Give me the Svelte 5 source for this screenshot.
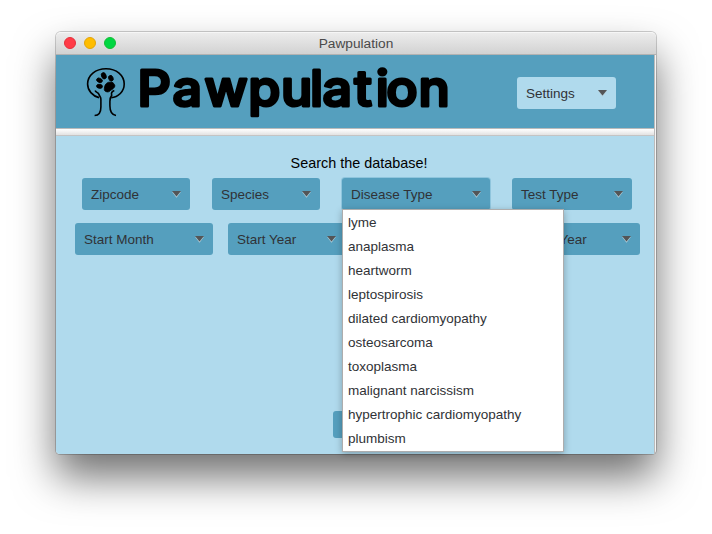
<script>
  const filters = [
    [['Zipcode', 108], ['Species', 108], ['Disease Type', 148], ['Test Type', 120]],
    [['Start Month', 138], ['Start Year', 117], ['', 148], ['End Year', 117]]
  ];
  const diseases = [
    'lyme', 'anaplasma', 'heartworm', 'leptospirosis', 'dilated cardiomyopathy',
    'osteosarcoma', 'toxoplasma', 'malignant narcissism', 'hypertrophic cardiomyopathy', 'plumbism'
  ];
</script>

{#snippet arrow()}
  <svg class="arrow" width="9" height="7" viewBox="0 0 9 7">
    <path d="M0 .8h9L4.5 6.8z" fill="#b5cfda" />
    <path d="M0 0h9L4.5 5.4z" fill="#535557" />
  </svg>
{/snippet}

<main>
  <div class="window">
    <div class="titlebar">
      <div class="lights"><i class="red"></i><i class="yellow"></i><i class="green"></i></div>
      <span class="title">Pawpulation</span>
    </div>
    <div class="content">
      <header>
        <svg class="logo" width="40" height="50" viewBox="0 0 40 50" fill="none" stroke="#000" stroke-width="1.6">
          <path d="M13 30.6C6.500 29 1.600 23.500 1.600 17C1.600 8.300 9.500 1.700 20 1.700s18.200 6.600 18.200 15.300c0 7.500-6 13.400-13 13.600" />
          <path d="M9.200 23.500c.4 2 3 1.700 3.700 3.800c.5 2 2.300 2.600 2 5.200v7.500c0 5-2 8.500-6.300 8.500M28.300 23.500c-2.500 1-3.300 2.700-2.600 4.800c-1.500 2-1.800 3.500-1.800 6v4.500c0 5 2 9.200 6.100 9.700" />
          <g fill="#000" stroke-width=".8">
            <ellipse cx="13.500" cy="13.300" rx="3" ry="2.100" transform="rotate(25 13.500 13.300)" />
            <ellipse cx="17.800" cy="8.800" rx="2.300" ry="3.300" transform="rotate(-22 17.800 8.800)" />
            <ellipse cx="24.900" cy="11.300" rx="2.200" ry="3" transform="rotate(-22 24.900 11.300)" />
            <ellipse cx="13.500" cy="19.300" rx="3" ry="2" transform="rotate(10 13.500 19.300)" />
            <path d="M20.800 16.200c1.300-1.200 2.800-1.300 4.200-.7c1.500-.5 2.600.3 2.800 1.500c1.500.8 1.300 3-.1 4.100c-.8 1.200-2 1.600-3 2.200c-1.200 1.600-3 1.900-4.300 1.400c-1.800-.3-2.400-1.900-2-3.500c.2-1.600.6-4 2.400-5z" />
          </g>
        </svg>
        <svg class="brand" width="320" height="66" viewBox="135 60 320 66">
          <text transform="scale(1.04 1)" y="106" x="132.300 165.900 196.600 238.600 270.200 298.100 310 340.700 361.200 371.500 402.300">Pawpulation</text>
        </svg>
        <button class="settings"><span>Settings</span>{@render arrow()}</button>
      </header>
      <div class="divider"></div>
      <section>
        <p>Search the database!</p>
        {#each filters as row, r}
          <div class="row" class:second={r === 1}>
            {#each row as [label, width]}
              <div class="field">
                <button class:open={label === 'Disease Type'} style:width="{width}px">
                  <span>{label}</span>{@render arrow()}
                </button>
                {#if label === 'Disease Type'}
                  <ul>
                    {#each diseases as d}<li>{d}</li>{/each}
                  </ul>
                {/if}
              </div>
            {/each}
          </div>
        {/each}
        <button class="search" aria-label="Search"></button>
      </section>
    </div>
  </div>
</main>

<style>
  :global(body) { background: #fff; overflow: hidden; }
  main {
    box-sizing: border-box;
    width: 712px;
    height: 534px;
    padding: 32px 55px 0 56px;
    font: 13.5px "Liberation Sans", Arial, sans-serif;
    color: #303236;
    overflow: hidden;
  }
  .window {
    box-sizing: border-box;
    width: 600px;
    height: 422px;
    background: #f4f4f4;
    border-radius: 5px 5px 4px 4px;
    box-shadow: 0 0 0 1px rgba(0, 0, 0, .19), 0 23px 42px rgba(0, 0, 0, .56);
  }
  .titlebar {
    box-sizing: border-box;
    position: relative;
    height: 23px;
    display: flex;
    justify-content: center;
    align-items: center;
    background: linear-gradient(#ececec, #d2d2d2);
    border-top: 1px solid #f6f6f6;
    border-bottom: 1px solid #b2b2b2;
    border-radius: 5px 5px 0 0;
  }
  .title { color: #4a4a4a; font-size: 13.7px; }
  .lights { position: absolute; left: 8px; top: 4px; display: flex; gap: 8px; }
  .lights i { box-sizing: border-box; width: 12px; height: 12px; border-radius: 50%; }
  .red { background: #ff3b47; border: 1px solid #e5303b; }
  .yellow { background: #ffbd00; border: 1px solid #e3a409; }
  .green { background: #00d742; border: 1px solid #14bd35; }
  .content {
    width: 598px;
    height: 399px;
    border-right: 1px solid #bbb;
    border-radius: 0 0 0 4px;
    background: #b0daed;
  }
  header {
    box-sizing: border-box;
    display: flex;
    align-items: flex-start;
    height: 73px;
    padding-left: 30px;
    background: #559fbe;
  }
  .logo { margin-top: 12px; flex: none; }
  .brand { margin: 5px 0 0 9px; flex: none; overflow: visible; }
  .brand text {
    font: 500 50px Inter, sans-serif;
    fill: #000;
    stroke: #000;
    stroke-width: 3px;
    stroke-linejoin: round;
  }
  .divider {
    box-sizing: border-box;
    height: 8px;
    background: linear-gradient(#fff, #e2e2e2);
    border-top: 1px solid #bbb;
    border-bottom: 1px solid #c4c4c4;
  }
  section { display: flex; flex-direction: column; align-items: center; height: 318px; }
  p { margin: 18px 0 0 8px; line-height: 18px; font-size: 14.4px; color: #000; }
  button {
    box-sizing: border-box;
    display: flex;
    align-items: center;
    justify-content: space-between;
    height: 32px;
    padding: 1px 9px 0 9px;
    border: 0;
    border-radius: 3px;
    background: #559fbe;
    color: #303236;
    font: inherit;
    white-space: nowrap;
  }
  .arrow { display: block; }
  .settings { width: 99px; background: #b0daed; margin: 22px 0 0 62px; }
  .row { display: flex; gap: 22px; margin: 6px 0 0 4px; }
  .row.second { gap: 15px; margin: 13px 0 0 5px; }
  .field { position: relative; }
  .open { box-shadow: 0 0 0 1px #8fc5dd; }
  ul {
    box-sizing: border-box;
    position: absolute;
    z-index: 5;
    left: 0;
    top: 31px;
    width: 222px;
    height: 243px;
    margin: 0;
    padding: 1px 0 0;
    list-style: none;
    background: #fff;
    border: 1px solid #adadad;
    box-shadow: 0 2px 7px rgba(0, 0, 0, .28);
  }
  li { height: 24px; line-height: 24px; padding-left: 5px; }
  .search { width: 44px; height: 27px; margin-top: 156px; }
</style>
